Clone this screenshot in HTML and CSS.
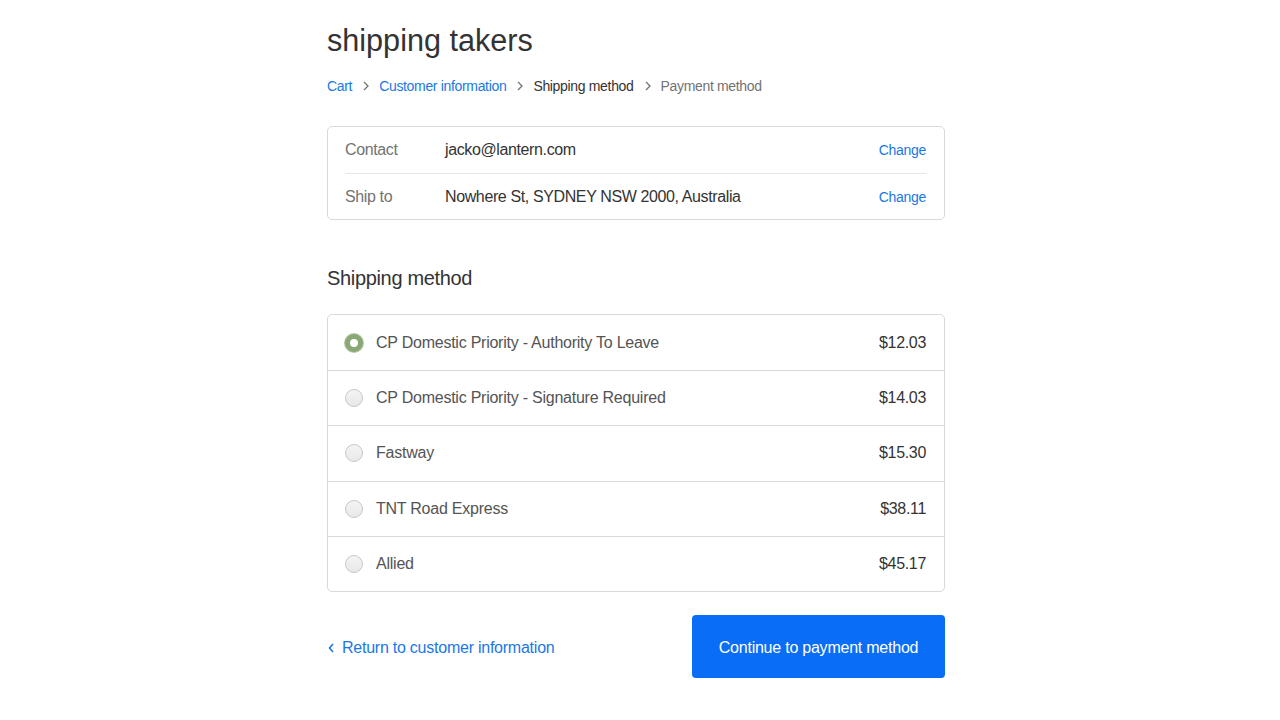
FILE: index.html
```html
<!DOCTYPE html>
<html>
<head>
<meta charset="utf-8">
<link rel="stylesheet" href="styles.css">
</head>
<body>
<main class="main">
  <h1 class="shop-title">shipping takers</h1>
  <nav class="crumbs">
    <a class="crumb link" href="#">Cart</a>
    <span class="sep"><svg width="8" height="10" viewBox="0 0 8 10"><path d="M2 1l4 4-4 4" fill="none" stroke="#737373" stroke-width="1.3"/></svg></span>
    <a class="crumb link" href="#">Customer information</a>
    <span class="sep"><svg width="8" height="10" viewBox="0 0 8 10"><path d="M2 1l4 4-4 4" fill="none" stroke="#737373" stroke-width="1.3"/></svg></span>
    <span class="crumb current">Shipping method</span>
    <span class="sep"><svg width="8" height="10" viewBox="0 0 8 10"><path d="M2 1l4 4-4 4" fill="none" stroke="#737373" stroke-width="1.3"/></svg></span>
    <span class="crumb future">Payment method</span>
  </nav>

  <section class="review">
    <div class="review-row">
      <div class="review-label">Contact</div>
      <div class="review-value">jacko@lantern.com</div>
      <a class="review-link" href="#">Change</a>
    </div>
    <div class="review-row">
      <div class="review-label">Ship to</div>
      <div class="review-value">Nowhere St, SYDNEY NSW 2000, Australia</div>
      <a class="review-link" href="#">Change</a>
    </div>
  </section>

  <h2 class="section-title">Shipping method</h2>

  <section class="options">
    <div class="option">
      <span class="radio checked"></span>
      <span class="opt-label">CP Domestic Priority - Authority To Leave</span>
      <span class="opt-price">$12.03</span>
    </div>
    <div class="option">
      <span class="radio"></span>
      <span class="opt-label">CP Domestic Priority - Signature Required</span>
      <span class="opt-price">$14.03</span>
    </div>
    <div class="option">
      <span class="radio"></span>
      <span class="opt-label">Fastway</span>
      <span class="opt-price">$15.30</span>
    </div>
    <div class="option">
      <span class="radio"></span>
      <span class="opt-label">TNT Road Express</span>
      <span class="opt-price">$38.11</span>
    </div>
    <div class="option">
      <span class="radio"></span>
      <span class="opt-label">Allied</span>
      <span class="opt-price">$45.17</span>
    </div>
  </section>

  <div class="actions">
    <a class="back" href="#"><svg width="8" height="12" viewBox="0 0 8 12"><path d="M6 2L2.5 6 6 10" fill="none" stroke="#1a78e6" stroke-width="1.6"/></svg>Return to customer information</a>
    <button class="btn">Continue to payment method</button>
  </div>
</main>
</body>
</html>
```

FILE: styles.css
```css
* { box-sizing: border-box; }
html, body { margin: 0; padding: 0; background: #fff; }
body {
  font-family: "Liberation Sans", Arial, Helvetica, sans-serif;
  color: #333;
  -webkit-font-smoothing: antialiased;
}
a { text-decoration: none; }
.main {
  width: 618px;
  padding-top: 20px;
  margin-left: 327px;
}
.shop-title {
  font-size: 30.6px;
  font-weight: normal;
  margin: 0;
  line-height: 40px;
  color: #333;
}
.crumbs {
  display: flex;
  align-items: center;
  margin-top: 17px;
  font-size: 14px;
  letter-spacing: -0.33px;
  line-height: 18px;
}
.crumb.link { color: #1a78e6; }
.crumb.current { color: #333; }
.crumb.future { color: #737373; }
.sep { display: inline-flex; margin: 0 9px 0 10px; }

.review {
  margin-top: 31px;
  border: 1px solid #d9d9d9;
  border-radius: 5px;
  padding: 0 17px;
}
.review-row {
  display: flex;
  align-items: center;
  height: 46px;
  font-size: 16px;
  letter-spacing: -0.38px;
}
.review-row + .review-row { border-top: 1px solid #e6e6e6; }
.review-label { width: 100px; color: #737373; }
.review-value { flex: 1; color: #333; }
.review-link { color: #1a78e6; font-size: 14px; letter-spacing: -0.3px; padding-right: 1px; }

.section-title {
  font-size: 20px;
  letter-spacing: -0.33px;
  font-weight: normal;
  margin: 44px 0 0;
  line-height: 28px;
  color: #333;
}
.options {
  margin-top: 22px;
  border: 1px solid #d9d9d9;
  border-radius: 5px;
}
.option {
  display: flex;
  align-items: center;
  height: 55.2px;
  padding: 0 17px;
  font-size: 16px;
  letter-spacing: -0.24px;
}
.option + .option { border-top: 1px solid #d9d9d9; }
.radio {
  width: 18px;
  height: 18px;
  border-radius: 50%;
  border: 1px solid #c8c8c8;
  background: linear-gradient(#f4f4f4, #e8e8e8);
  margin-right: 13px;
  flex: none;
}
.radio.checked {
  border: 5px solid #8aa876;
  background: #fff;
  box-shadow: 0 0 0 1px #b6c9a8;
}
.opt-label { flex: 1; color: #545454; }
.opt-price { color: #333; letter-spacing: -0.33px; padding-right: 1px; }

.actions {
  display: flex;
  justify-content: space-between;
  align-items: center;
  margin-top: 23px;
}
.back {
  display: inline-flex;
  align-items: center;
  gap: 7px;
  padding-top: 3px;
  color: #1a78e6;
  font-size: 16px;
  letter-spacing: -0.24px;
}
.btn {
  width: 253px;
  height: 63px;
  padding: 3px 0 0;
  border: 0;
  border-radius: 4px;
  background: #0a6df5;
  color: #fff;
  font-family: "Liberation Sans", Arial, sans-serif;
  font-size: 16px;
  letter-spacing: -0.23px;
}
```
